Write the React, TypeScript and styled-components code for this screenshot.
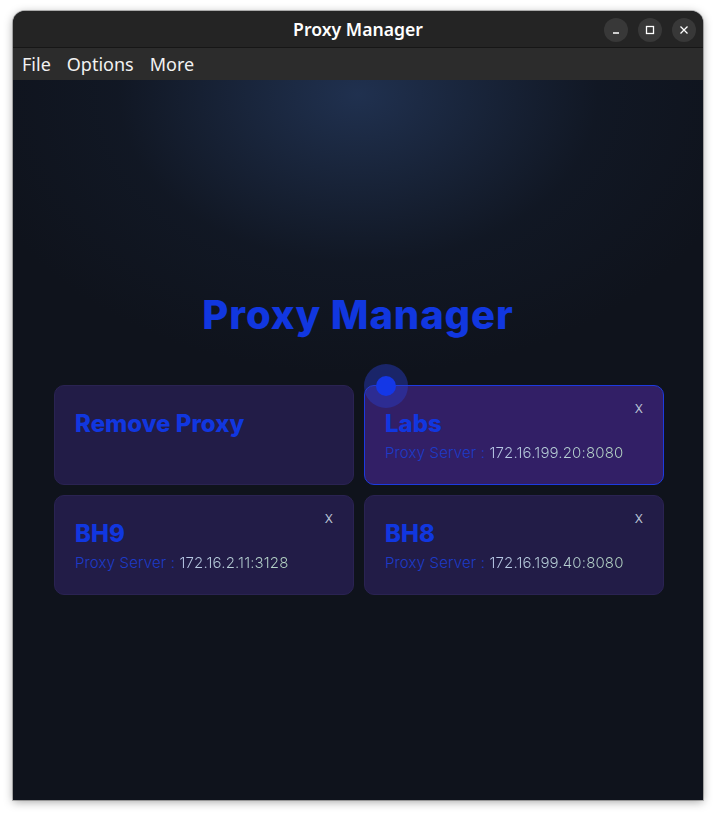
import React from 'react';
import styled, { createGlobalStyle } from 'styled-components';

const Global = createGlobalStyle`
  html, body {
    margin: 0;
    background: #ffffff;
  }
  * { box-sizing: border-box; }
`;

const Page = styled.div`
  width: 716px;
  height: 816px;
  padding: 11px 13px 0 13px;
`;

const Window = styled.div`
  width: 690px;
  height: 789px;
  display: flex;
  flex-direction: column;
  border-radius: 12px 12px 0 0;
  overflow: hidden;
  background: #0f131c;
  box-shadow: 0 2px 10px rgba(0, 0, 0, 0.35), 0 0 0 1px rgba(0, 0, 0, 0.25);
`;

const TitleBar = styled.div`
  height: 37px;
  flex: none;
  background: #242424;
  border-bottom: 1px solid #161616;
  display: flex;
  align-items: center;
  justify-content: center;
  position: relative;
  font-family: "Noto Sans", "DejaVu Sans", sans-serif;
  font-weight: 600;
  font-size: 17.6px;
  color: #ffffff;
`;

const WinButtons = styled.div`
  position: absolute;
  right: 7px;
  top: 7px;
  display: flex;
  gap: 10px;
`;

const WinButton = styled.div`
  width: 24px;
  height: 24px;
  border-radius: 50%;
  background: #383838;
  display: flex;
  align-items: center;
  justify-content: center;
`;

const MenuBar = styled.div`
  height: 32px;
  flex: none;
  background: #2c2c2c;
  display: flex;
  align-items: center;
  gap: 16px;
  padding-left: 9px;
  font-family: "Noto Sans", "DejaVu Sans", sans-serif;
  font-size: 18px;
  color: #f2f2f2;
`;

const Content = styled.div`
  flex: 1;
  background:
    radial-gradient(ellipse 400px 280px at 50% 2%, rgba(36, 56, 92, 0.8), rgba(20, 30, 48, 0.4) 60%, rgba(15, 19, 28, 0) 100%),
    #0f131c;
  display: flex;
  flex-direction: column;
  align-items: center;
  padding-top: 211px;
`;

const Heading = styled.h1`
  margin: 0;
  font-family: "Inter", sans-serif;
  font-weight: 800;
  font-size: 40px;
  line-height: 48px;
  letter-spacing: 0.9px;
  color: #1137e0;
`;

const Grid = styled.div`
  margin-top: 46px;
  margin-left: 2px;
  width: 610px;
  display: grid;
  grid-template-columns: 1fr 1fr;
  gap: 10px;
`;

const Card = styled.div<{ $active?: boolean }>`
  position: relative;
  height: 100px;
  border-radius: 10px;
  padding: 20px 20px 18px;
  background: ${p => (p.$active ? '#321f66' : '#221c47')};
  border: 1px solid ${p => (p.$active ? '#1d3be0' : '#2a2352')};
`;

const CardHead = styled.div`
  display: flex;
  justify-content: space-between;
  align-items: flex-start;
`;

const CardTitle = styled.div`
  font-family: "Inter", sans-serif;
  font-weight: 800;
  font-size: 24px;
  line-height: 36px;
  color: #1137e0;
`;

const Close = styled.div`
  font-family: "Inter", sans-serif;
  font-size: 12px;
  color: #b9c2d4;
  margin-top: -5px;
  margin-right: 0px;
`;

const Server = styled.div`
  font-family: "Inter", sans-serif;
  font-weight: 300;
  font-size: 15px;
  line-height: 22px;
  letter-spacing: 0.15px;
  color: #1d3bc8;
`;

const Address = styled.span`
  background: linear-gradient(90deg, #b8c8e8, #b5d6c2);
  -webkit-background-clip: text;
  background-clip: text;
  color: transparent;
`;

const Cursor = styled.div`
  position: absolute;
  left: -1px;
  top: -22px;
  width: 44px;
  height: 44px;
  border-radius: 50%;
  background: rgba(40, 60, 200, 0.45);
  display: flex;
  align-items: center;
  justify-content: center;
  &::after {
    content: '';
    width: 20px;
    height: 20px;
    border-radius: 50%;
    background: #1437e6;
  }
`;

const proxies = [
  { name: 'Labs', addr: '172.16.199.20:8080', active: true },
  { name: 'BH9', addr: '172.16.2.11:3128' },
  { name: 'BH8', addr: '172.16.199.40:8080' },
];

export default function App() {
  return (
    <Page>
      <Global />
      <Window>
        <TitleBar>
          Proxy Manager
          <WinButtons>
            <WinButton>
              <svg width="10" height="10" viewBox="0 0 10 10"><path d="M2 8h6" stroke="#fff" strokeWidth="1.3" /></svg>
            </WinButton>
            <WinButton>
              <svg width="10" height="10" viewBox="0 0 10 10"><rect x="1.5" y="1.5" width="7" height="7" fill="none" stroke="#fff" strokeWidth="1.3" /></svg>
            </WinButton>
            <WinButton>
              <svg width="10" height="10" viewBox="0 0 10 10"><path d="M1.5 1.5l7 7M8.5 1.5l-7 7" stroke="#fff" strokeWidth="1.3" /></svg>
            </WinButton>
          </WinButtons>
        </TitleBar>
        <MenuBar>
          <span>File</span>
          <span>Options</span>
          <span>More</span>
        </MenuBar>
        <Content>
          <Heading>Proxy Manager</Heading>
          <Grid>
            <Card>
              <CardTitle>Remove Proxy</CardTitle>
            </Card>
            {proxies.map(p => (
              <Card key={p.name} $active={p.active}>
                {p.active && <Cursor />}
                <CardHead>
                  <CardTitle>{p.name}</CardTitle>
                  <Close>X</Close>
                </CardHead>
                <Server>
                  Proxy Server : <Address>{p.addr}</Address>
                </Server>
              </Card>
            ))}
          </Grid>
        </Content>
      </Window>
    </Page>
  );
}
